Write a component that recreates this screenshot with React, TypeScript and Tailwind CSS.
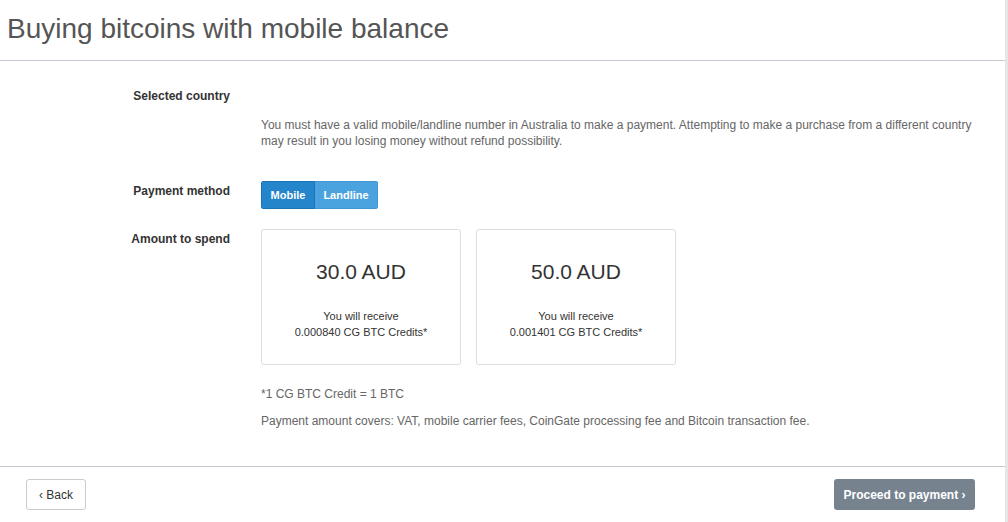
import React from 'react';

const amounts = [
  { value: '30.0 AUD', credits: '0.000840' },
  { value: '50.0 AUD', credits: '0.001401' },
];

const App: React.FC = () => {
  return (
    <div className="flex h-[522px] w-[1008px] overflow-hidden bg-white font-['Liberation_Sans',Arial,sans-serif]">
      <div className="flex w-[1005px] flex-col">
        <div className="flex h-[61px] items-center border-b border-[#c9c9d3] pl-[7px]">
          <h1 className="text-[28px] leading-none text-[#555] pb-[3px]">Buying bitcoins with mobile balance</h1>
        </div>

        <div className="grid grid-cols-[230px_1fr] gap-x-[31px] pt-[27px] pb-[37px] text-[12px] leading-[16px]">
          <div className="text-right font-bold text-[#333]">Selected country</div>
          <div className="h-[29px]" />

          <div />
          <p className="pr-[30px] text-[#666]">
            You must have a valid mobile/landline number in Australia to make a payment. Attempting to make a purchase from a different country may result in you losing money without refund possibility.
          </p>

          <div className="pt-[34px] text-right font-bold text-[#333]">Payment method</div>
          <div className="pt-[32px]">
            <div className="inline-flex h-[28px] overflow-hidden rounded-[3px] text-[11px] font-bold text-white">
              <button className="w-[54px] border border-[#1b74b5] bg-[#2585ca]">Mobile</button>
              <button className="w-[63px] border border-l-0 border-[#3f97d6] bg-[#4aa3df]">Landline</button>
            </div>
          </div>

          <div className="pt-[22px] text-right font-bold text-[#333]">Amount to spend</div>
          <div className="pt-[20px]">
            <div className="flex gap-[15px]">
              {amounts.map((a) => (
                <div
                  key={a.value}
                  className="flex h-[136px] w-[200px] flex-col items-center rounded-[3px] border border-[#ddd] text-[#333]"
                >
                  <div className="mt-[29px] text-[21px] leading-[26px]">{a.value}</div>
                  <div className="mt-[23px] text-center text-[11px] leading-[16px]">
                    You will receive
                    <br />
                    {a.credits} CG BTC Credits*
                  </div>
                </div>
              ))}
            </div>
            <p className="mt-[21px] text-[#666]">*1 CG BTC Credit = 1 BTC</p>
            <p className="mt-[11px] text-[#666]">
              Payment amount covers: VAT, mobile carrier fees, CoinGate processing fee and Bitcoin transaction fee.
            </p>
          </div>
        </div>

        <div className="flex items-center justify-between border-t border-[#c9c9d3] px-[26px] pt-[12px] pr-[30px]">
          <button className="h-[31px] w-[60px] rounded-[3px] border border-[#ccc] bg-white text-[12px] text-[#333]">
            ‹ Back
          </button>
          <button className="h-[31px] w-[141px] rounded-[3px] bg-[#76838f] text-[12px] font-bold text-white">
            Proceed to payment ›
          </button>
        </div>
      </div>
      <div className="w-[3px] bg-[#e6e6e6]" />
    </div>
  );
};

export default App;
